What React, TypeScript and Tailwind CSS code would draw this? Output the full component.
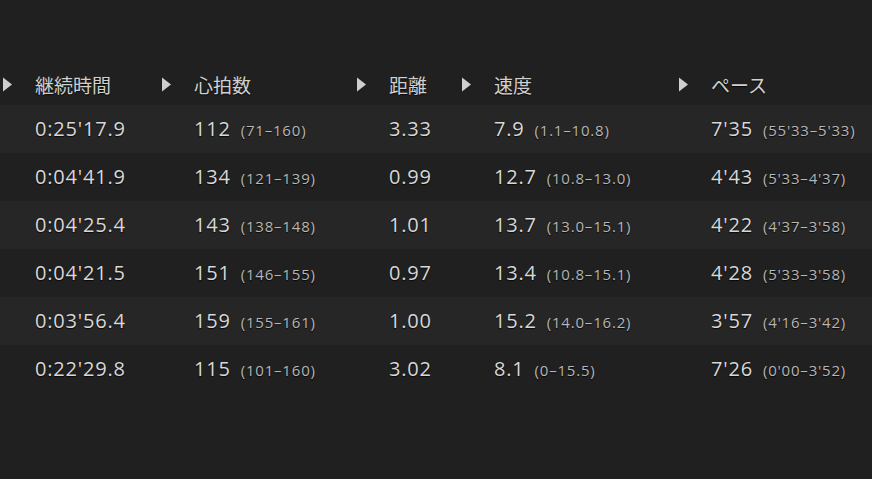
import React from "react";

type Cell = { v: string; r?: string };

const headers = ["継続時間", "心拍数", "距離", "速度", "ペース"];

const rows: Cell[][] = [
  [{ v: "0:25'17.9" }, { v: "112", r: "(71–160)" }, { v: "3.33" }, { v: "7.9", r: "(1.1–10.8)" }, { v: "7'35", r: "(55'33–5'33)" }],
  [{ v: "0:04'41.9" }, { v: "134", r: "(121–139)" }, { v: "0.99" }, { v: "12.7", r: "(10.8–13.0)" }, { v: "4'43", r: "(5'33–4'37)" }],
  [{ v: "0:04'25.4" }, { v: "143", r: "(138–148)" }, { v: "1.01" }, { v: "13.7", r: "(13.0–15.1)" }, { v: "4'22", r: "(4'37–3'58)" }],
  [{ v: "0:04'21.5" }, { v: "151", r: "(146–155)" }, { v: "0.97" }, { v: "13.4", r: "(10.8–15.1)" }, { v: "4'28", r: "(5'33–3'58)" }],
  [{ v: "0:03'56.4" }, { v: "159", r: "(155–161)" }, { v: "1.00" }, { v: "15.2", r: "(14.0–16.2)" }, { v: "3'57", r: "(4'16–3'42)" }],
  [{ v: "0:22'29.8" }, { v: "115", r: "(101–160)" }, { v: "3.02" }, { v: "8.1", r: "(0–15.5)" }, { v: "7'26", r: "(0'00–3'52)" }],
];

const cols = "grid grid-cols-[159px_195px_105px_217px_1fr]";
const shadow = "[text-shadow:0_1px_1px_rgba(0,0,0,0.8)]";

function Triangle() {
  return (
    <svg width="11" height="15" viewBox="0 0 11 15" className="shrink-0">
      <path d="M1 0.5 L10 7.5 L1 14.5 Z" fill="#cfcfcf" />
    </svg>
  );
}

export default function App() {
  return (
    <div
      className="h-[479px] w-full overflow-hidden bg-[#202020] pt-[64px] text-[#d4d4d4]"
      style={{ fontFamily: "'Open Sans', 'Noto Sans CJK JP', sans-serif" }}
    >
      <div className={`${cols} h-[41px] items-center`}>
        {headers.map((h) => (
          <div key={h} className="flex items-center pl-[2px]">
            <Triangle />
            <span
              className={`ml-[22px] text-[19px] leading-none text-[#d0d0d0] ${shadow}`}
              style={{ fontFamily: "'Noto Sans CJK JP', sans-serif" }}
            >
              {h}
            </span>
          </div>
        ))}
      </div>
      {rows.map((row, i) => (
        <div
          key={i}
          className={`${cols} h-[48px] items-center ${i % 2 === 0 ? "bg-[#262626]" : ""}`}
        >
          {row.map((c, j) => (
            <div key={j} className="flex items-baseline pl-[35px] whitespace-nowrap">
              <span className={`text-[20px] leading-none tracking-[0.8px] text-[#d8d8d8] ${shadow}`}>{c.v}</span>
              {c.r && (
                <span className={`ml-[10px] text-[15px] leading-none tracking-[0.8px] text-[#b6b6b6] ${shadow}`}>
                  {c.r}
                </span>
              )}
            </div>
          ))}
        </div>
      ))}
    </div>
  );
}
